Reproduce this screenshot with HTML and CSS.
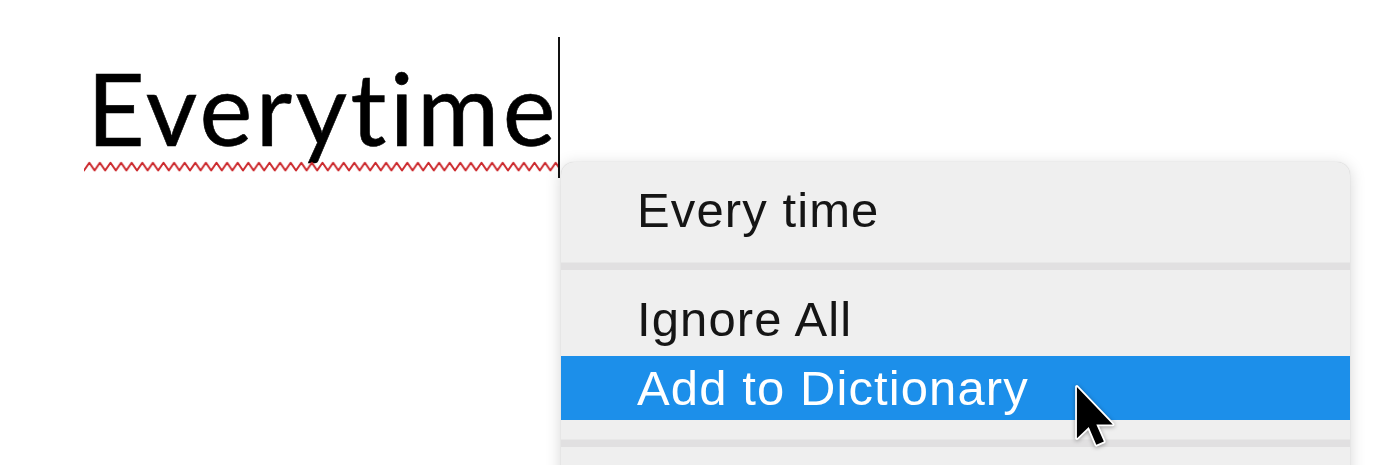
FILE: index.html
```html
<!DOCTYPE html>
<html lang="en">
<head>
  <meta charset="UTF-8">
  <title>Spelling suggestion</title>
  <link rel="stylesheet" href="styles.css">
</head>
<body>

  <!-- Document text with the misspelled word -->
  <div class="doc">
    <span class="word">Everytime<svg class="squiggle" width="476" height="12" aria-hidden="true">
        <defs>
          <pattern id="wave" width="10.6" height="12" patternUnits="userSpaceOnUse">
            <path d="M-2.65 5.5 L0 9.5 L5.3 1.8 L10.6 9.5 L13.25 5.5" fill="none" stroke="#cc2a2e" stroke-width="2" stroke-linejoin="round"/>
          </pattern>
        </defs>
        <rect width="476" height="12" fill="url(#wave)"/>
      </svg><span class="caret"></span></span>
  </div>

  <!-- Context menu -->
  <div class="menu">
    <div class="menu-group first">
      <div class="menu-item">Every time</div>
    </div>
    <div class="menu-sep"></div>
    <div class="menu-group">
      <div class="menu-item upper">Ignore All</div>
      <div class="menu-item active">Add to Dictionary</div>
    </div>
    <div class="menu-sep"></div>
    <div class="menu-group"></div>
  </div>

  <!-- Mouse pointer -->
  <svg class="pointer" width="46" height="69" viewBox="-1.5 -1.5 14 21" aria-hidden="true">
    <path d="M0 0 V15.6 L3.6 12.2 L5.9 17.6 L8.2 16.6 L5.9 11.4 H10.9 Z" fill="#000" stroke="#fff" stroke-width="1.1" stroke-linejoin="round" paint-order="stroke"/>
  </svg>

</body>
</html>
```

FILE: styles.css
```css
html, body {
  margin: 0;
  height: 100%;
}
body {
  background: #fff;
  overflow: hidden;
  position: relative;
}
.doc {
  padding: 0 0 0 87px;
  height: 160px;
}
.word {
  position: relative;
  display: inline-block;
  font-family: Lato, "Open Sans", sans-serif;
  font-size: 100px;
  line-height: 100px;
  letter-spacing: 3.4px;
  color: #000;
  -webkit-text-stroke: 0.6px #000;
  margin-top: 57px;
}
.squiggle {
  position: absolute;
  left: -3px;
  top: 104px;
}
.caret {
  position: absolute;
  right: -1px;
  top: -20px;
  width: 2px;
  height: 141px;
  background: #111;
}
.menu {
  position: absolute;
  left: 561px;
  top: 162px;
  width: 789px;
  height: 340px;
  background: #efefef;
  border-radius: 13px;
  box-shadow: 0 3px 16px rgba(0,0,0,0.17), 0 0 1px rgba(0,0,0,0.2);
  font-family: "Liberation Sans", Arial, sans-serif;
  font-size: 49px;
  letter-spacing: 1.1px;
  color: #151515;
}
.menu-group.first {
  padding: 16px 0 20px;
}
.menu-group {
  padding: 20px 0 19px;
}
.menu-item {
  height: 64px;
  line-height: 64px;
  padding-left: 76px;
}
.menu-item.upper {
  margin-top: 1px;
  margin-bottom: 3px;
  line-height: 56px;
  height: 62px;
}
.menu-item.active {
  background: #1c8fea;
  color: #fff;
}
.menu-sep {
  height: 7px;
  background: #e1e0e1;
  border-top: 1px solid #e8e8e8;
}
.pointer {
  position: absolute;
  left: 1072px;
  top: 382px;
  filter: drop-shadow(0 1px 2px rgba(0,0,0,0.35));
}
```
